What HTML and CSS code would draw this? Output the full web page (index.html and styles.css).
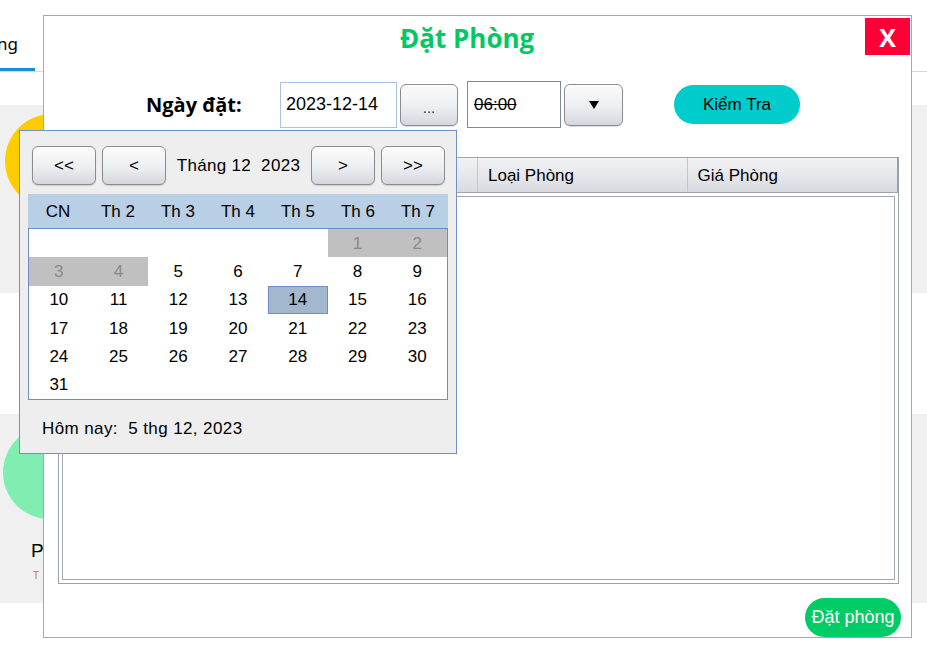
FILE: index.html
```html
<!DOCTYPE html>
<html lang="vi">
<head>
<meta charset="utf-8">
<title>Đặt Phòng</title>
<link rel="stylesheet" href="styles.css">
</head>
<body>
<header class="tabs">
  <div class="tab">Phòng</div>
</header>
<main class="cards">
  <section class="card">
    <div class="room"><div class="avatar avatar-yellow"></div></div>
  </section>
  <section class="card">
    <div class="room">
      <div class="avatar avatar-green"></div>
      <div class="room-name">P</div>
      <div class="room-price">T</div>
    </div>
  </section>
</main>

<div class="dialog">
  <div class="dlg-head">
    <div class="dlg-title">Đặt Phòng</div>
    <div class="close">X</div>
  </div>
  <div class="form-row">
    <div class="form-label">Ngày đặt:</div>
    <div class="date-input">2023-12-14</div>
    <div class="btn btn-dots">...</div>
    <div class="time-input">06:00</div>
    <div class="btn btn-drop"><svg width="10" height="8" viewBox="0 0 10 8"><polygon points="0,0 10,0 5,8" fill="#000"/></svg></div>
    <div class="pill pill-check">Kiểm Tra</div>
  </div>
  <div class="table">
    <div class="thead">
      <div class="th"></div>
      <div class="th"></div>
      <div class="th">Loại Phòng</div>
      <div class="th">Giá Phòng</div>
    </div>
    <div class="tbody"><div class="tbody-inner"></div></div>
  </div>
  <div class="pill pill-book">Đặt phòng</div>
</div>

<div class="cal">
  <div class="cal-nav">
    <div class="btn nav-btn">&lt;&lt;</div>
    <div class="btn nav-btn">&lt;</div>
    <div class="cal-label">Tháng 12&nbsp; 2023</div>
    <div class="btn nav-btn">&gt;</div>
    <div class="btn nav-btn">&gt;&gt;</div>
  </div>
  <div class="cal-body">
    <div class="cal-week">
      <div>CN</div><div>Th 2</div><div>Th 3</div><div>Th 4</div><div>Th 5</div><div>Th 6</div><div>Th 7</div>
    </div>
    <div class="cal-grid">
      <div></div><div></div><div></div><div></div><div></div>
      <div class="off">1</div><div class="off">2</div>
      <div class="off">3</div><div class="off">4</div><div>5</div><div>6</div><div>7</div><div>8</div><div>9</div>
      <div>10</div><div>11</div><div>12</div><div>13</div><div class="sel">14</div><div>15</div><div>16</div>
      <div>17</div><div>18</div><div>19</div><div>20</div><div>21</div><div>22</div><div>23</div>
      <div>24</div><div>25</div><div>26</div><div>27</div><div>28</div><div>29</div><div>30</div>
      <div>31</div>
    </div>
  </div>
  <div class="cal-today">Hôm nay:&nbsp; 5 thg 12, 2023</div>
</div>
</body>
</html>
```
FILE: styles.css
```css
* { box-sizing: border-box; margin: 0; padding: 0; }

body {
  width: 927px;
  height: 645px;
  overflow: hidden;
  position: relative;
  background: #ffffff;
  font-family: "Liberation Sans", Arial, sans-serif;
  color: #000;
}

/* background application */
.tabs {
  height: 72px;
  border-bottom: 1px solid #d6d6d6;
  display: flex;
}
.tab {
  margin-left: -51px;
  padding: 32px 17px 0;
  height: 71px;
  font-family: "Noto Sans", sans-serif;
  font-size: 17px;
  line-height: 23px;
  border-bottom: 3px solid #1a8fd6;
}

.cards {
  display: flex;
  flex-direction: column;
  gap: 121px;
  margin-top: 33px;
}
.card {
  background: #f0f0f0;
  height: 188px;
}
.card + .card { height: 189px; }
.room {
  display: flex;
  flex-direction: column;
}
.avatar {
  width: 94px;
  height: 94px;
  border-radius: 50%;
}
.avatar-yellow { background: #ffcc00; margin: 9px 0 0 5px; }
.avatar-green { background: #80eeb0; margin: 12px 0 0 3px; width: 93px; height: 93px; }
.room-name {
  margin: 21px 0 0 31px;
  font-size: 19px;
  line-height: 22px;
}
.room-price {
  margin: 8px 0 0 33px;
  font-size: 10px;
  line-height: 12px;
  color: #c8783c;
}

/* dialog */
.dialog {
  position: absolute;
  left: 43px;
  top: 15px;
  width: 869px;
  height: 623px;
  border: 1px solid #a8a8a8;
  background: #fff;
  display: flex;
  flex-direction: column;
}
.dlg-head {
  height: 65px;
  display: flex;
  align-items: flex-start;
}
.dlg-title {
  margin: 5px 0 0 356px;
  font-family: "Open Sans", sans-serif;
  font-weight: 700;
  font-size: 26px;
  line-height: 35px;
  color: #00c864;
}
.close {
  margin: 2px 1px 0 auto;
  width: 45px;
  height: 37px;
  background: #ff0036;
  color: #fff;
  font-family: "Open Sans", sans-serif;
  font-weight: 700;
  font-size: 25px;
  display: flex;
  align-items: center;
  justify-content: center;
}

.form-row {
  height: 47px;
  display: flex;
  align-items: center;
  padding-left: 102px;
}
.form-label {
  width: 134px;
  font-family: "Open Sans", sans-serif;
  font-weight: 700;
  font-size: 20px;
}
.date-input {
  width: 117px;
  height: 46px;
  border: 1px solid #a9c4e0;
  padding-left: 5px;
  font-size: 18px;
  display: flex;
  align-items: center;
}
.btn {
  display: flex;
  align-items: center;
  justify-content: center;
  border: 1px solid #8a8c90;
  border-radius: 6px;
  background: linear-gradient(#fcfcfc, #eceef1 55%, #d4d7dd);
  box-shadow: inset 0 1px 0 #fff, 0 1px 1px rgba(0,0,0,0.15);
  font-size: 17px;
}
.btn-dots {
  width: 58px;
  height: 42px;
  margin-left: 3px;
  font-size: 15px;
  color: #333;
  padding-top: 6px;
}
.time-input {
  width: 94px;
  height: 47px;
  margin-left: 9px;
  border: 1px solid #7d8a99;
  padding-left: 6px;
  font-size: 17px;
  text-decoration: line-through;
  display: flex;
  align-items: center;
}
.btn-drop {
  width: 59px;
  height: 42px;
  margin-left: 3px;
}
.pill {
  display: flex;
  align-items: center;
  justify-content: center;
  border-radius: 20px;
}
.pill-check {
  width: 126px;
  height: 39px;
  margin-left: 51px;
  background: #00cccc;
  font-size: 17px;
}

.table {
  margin: 29px 0 0 14px;
  width: 841px;
  height: 427px;
  display: flex;
  flex-direction: column;
}
.thead {
  height: 36px;
  display: grid;
  grid-template-columns: repeat(4, 1fr);
  background: linear-gradient(#f1f2f5, #e3e5e9 60%, #d7dae0);
  border: 1px solid #a0a4ac;
  border-right: 2px solid #9a9ea6;
}
.th {
  border-right: 1px solid #c3c6cc;
  padding: 2px 0 0 10px;
  font-size: 17px;
  display: flex;
  align-items: center;
}
.th:last-child { border-right: none; }
.tbody {
  flex: 1;
  border: 1px solid #9ea2ab;
  border-top: none;
  padding: 3px;
  display: flex;
}
.tbody-inner {
  flex: 1;
  border: 1px solid #a4a8b0;
}

.pill-book {
  margin: auto 10px 0 auto;
  width: 96px;
  height: 39px;
  background: #00cc66;
  color: #fff;
  font-size: 18px;
}

/* calendar popup */
.cal {
  position: absolute;
  left: 19px;
  top: 130px;
  width: 438px;
  height: 324px;
  border: 1px solid #7090c8;
  background: #eeeeee;
}
.cal-nav {
  margin: 15px 11px 0 12px;
  height: 39px;
  display: flex;
  align-items: center;
  gap: 6px;
}
.nav-btn {
  width: 64px;
  height: 39px;
}
.cal-label {
  flex: 1;
  text-align: center;
  font-size: 17px;
  letter-spacing: 0.3px;
  white-space: pre;
}
.cal-body {
  margin: 9px 8px 0 8px;
}
.cal-week {
  height: 34px;
  display: grid;
  grid-template-columns: repeat(7, 1fr);
  background: #b8cfe5;
  align-items: center;
  text-align: center;
  font-size: 17px;
  padding-top: 2px;
}
.cal-grid {
  height: 172px;
  display: grid;
  grid-template-columns: repeat(7, 1fr);
  grid-template-rows: repeat(6, 1fr);
  border: 1px solid #6e8cc6;
  background: #fff;
  font-size: 17px;
}
.cal-grid > div {
  display: flex;
  align-items: center;
  justify-content: center;
  padding-top: 1px;
}
.cal-grid .off {
  background: #c0c0c0;
  color: #8a8a8a;
}
.cal-grid .sel {
  background: #a3b7ce;
  border: 1px solid #6e8cc6;
}
.cal-today {
  margin: 19px 0 0 22px;
  font-size: 17px;
  line-height: 20px;
  letter-spacing: 0.4px;
}
```
